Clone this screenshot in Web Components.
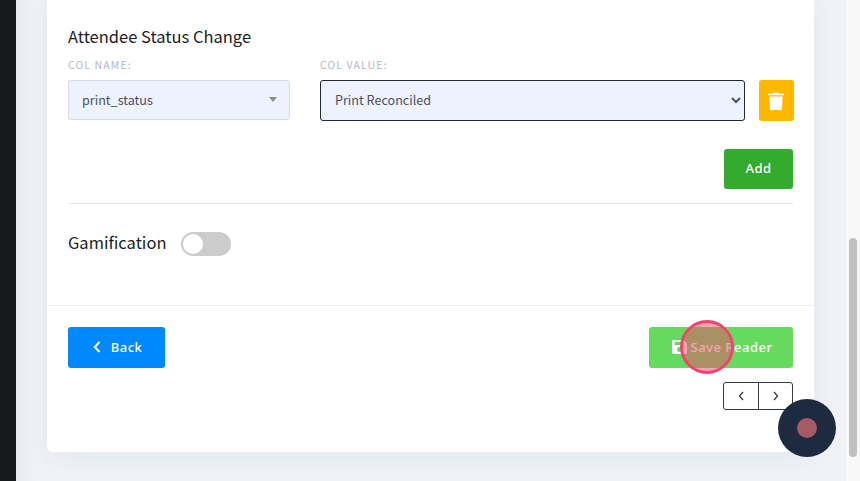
<!DOCTYPE html>
<html>
<head>
<meta charset="utf-8">
<title>Reader</title>
<style>
  html, body { margin: 0; height: 100%; overflow: hidden; }
  body { font-family: "Noto Sans CJK JP", "Noto Sans", sans-serif; background: #f1f2f8; }
</style>
</head>
<body>
<reader-page>
  <reader-card>
    <status-change slot="body"></status-change>
    <gamification-row slot="body"></gamification-row>
    <reader-footer slot="footer"></reader-footer>
  </reader-card>
</reader-page>
<click-marker></click-marker>
<chat-bubble></chat-bubble>

<script>
class ReaderPage extends HTMLElement {
    connectedCallback() {
        this.attachShadow({ mode: 'open' });
        this.shadowRoot.innerHTML = `
            <style>
                :host {
                    display: flex;
                    height: 481px;
                    overflow: hidden;
                }
                .strip { width: 16px; background: #17191c; flex: none; }
                .content {
                    flex: 1;
                    padding: 0 31px;
                    min-width: 0;
                    background: linear-gradient(90deg, #e9eaf1 0, #f1f2f8 20px);
                }
                .track {
                    width: 15px;
                    flex: none;
                    background: #f8f8f8;
                    border-left: 1px solid #eeeeee;
                    box-sizing: border-box;
                    padding-top: 238px;
                }
                .thumb {
                    width: 8px;
                    height: 219px;
                    margin-left: 3px;
                    border-radius: 4px;
                    background: #c0c0c0;
                }
            </style>
            <div class="strip"></div>
            <div class="content"><slot></slot></div>
            <div class="track"><div class="thumb"></div></div>
        `;
    }
}

class ReaderCard extends HTMLElement {
    connectedCallback() {
        this.attachShadow({ mode: 'open' });
        this.shadowRoot.innerHTML = `
            <style>
                :host {
                    display: block;
                    background: #fff;
                    height: 452px;
                    border-radius: 0 0 6px 6px;
                    box-shadow: 0 4px 24px rgba(40, 50, 90, 0.07);
                }
                .body { padding: 25px 21px 0; box-sizing: border-box; border-bottom: 1px solid #eceef1; height: 306px; }
                .foot { padding: 21px 21px 0; }
            </style>
            <div class="body"><slot name="body"></slot></div>
            <div class="foot"><slot name="footer"></slot></div>
        `;
    }
}

class StatusChange extends HTMLElement {
    connectedCallback() {
        this.attachShadow({ mode: 'open' });
        this.shadowRoot.innerHTML = `
            <style>
                :host { display: block; }
                h3 {
                    margin: 0;
                    font-size: 16.5px;
                    line-height: 22px;
                    font-weight: 400;
                    color: #1b1d21;
                }
                .row {
                    display: flex;
                    align-items: flex-start;
                    margin-top: 11px;
                }
                .name { width: 222px; flex: none; }
                .value { width: 425px; flex: none; margin-left: 30px; }
                label {
                    display: block;
                    font-size: 10.5px;
                    line-height: 14px;
                    letter-spacing: 1.1px;
                    color: #b4b9c3;
                    margin-bottom: 8px;
                }
                .fake, select {
                    display: block;
                    box-sizing: border-box;
                    width: 100%;
                    font: 12.6px "Noto Sans CJK JP", "Noto Sans", sans-serif;
                    color: #4a5060;
                    background-color: #eef2fd;
                    border-radius: 3px;
                }
                .fake {
                    display: flex;
                    align-items: center;
                    justify-content: space-between;
                    height: 40px;
                    padding: 0 12px 2px 13px;
                    border: 1px solid #d8dbe3;
                }
                .caret {
                    width: 0;
                    height: 0;
                    border: 4px solid transparent;
                    border-top: 5px solid #888c94;
                    border-bottom: 0;
                }
                select {
                    height: 41px;
                    padding: 0 10px 2px;
                    border: 1px solid #1e2738;
                    outline: none;
                }
                .trash {
                    flex: none;
                    display: flex;
                    align-items: center;
                    justify-content: center;
                    box-sizing: border-box;
                    width: 35px;
                    height: 41px;
                    margin: 22px 0 0 14px;
                    padding-right: 1px;
                    background: #ffb700;
                    border-radius: 3px;
                }
                .actions {
                    display: flex;
                    justify-content: flex-end;
                    margin-top: 28px;
                }
                .add {
                    width: 69px;
                    height: 40px;
                    border: 0;
                    padding: 0 0 2px;
                    border-radius: 3px;
                    background: #33ab2e;
                    color: #fff;
                    font: 500 13px "Noto Sans", sans-serif;
                    letter-spacing: 0.5px;
                }
                hr {
                    border: 0;
                    border-top: 1px solid #e4e6ea;
                    margin: 14px 0 0;
                }
            </style>
            <h3>Attendee Status Change</h3>
            <div class="row">
                <div class="name">
                    <label>COL NAME:</label>
                    <div class="fake"><span>print_status</span><span class="caret"></span></div>
                </div>
                <div class="value">
                    <label>COL VALUE:</label>
                    <select><option>Print Reconciled</option></select>
                </div>
                <div class="trash">
                    <svg width="16" height="18" viewBox="0 0 16 18">
                        <path fill="#fff" d="M5.5 0.5h5l0.6 1.300H15.400c0.300 0 0.600 0.300 0.600 0.600v0.900H0V2.400c0-0.300 0.300-0.600 0.600-0.600h4.300zM1.400 4.400h13.200l-0.700 12c0 0.900-0.700 1.600-1.600 1.600H3.700c-0.900 0-1.600-0.700-1.600-1.600z"/>
                    </svg>
                </div>
            </div>
            <div class="actions"><button class="add">Add</button></div>
            <hr>
        `;
    }
}

class GamificationRow extends HTMLElement {
    connectedCallback() {
        this.attachShadow({ mode: 'open' });
        this.shadowRoot.innerHTML = `
            <style>
                :host {
                    display: flex;
                    align-items: center;
                    gap: 15px;
                    margin-top: 28px;
                    font-size: 16.5px;
                    line-height: 22px;
                    color: #1b1d21;
                }
                span { margin-top: -4px; }
                .switch {
                    width: 50px;
                    height: 24px;
                    box-sizing: border-box;
                    padding: 2px;
                    border-radius: 12px;
                    background: #cccccc;
                }
                .knob {
                    width: 20px;
                    height: 20px;
                    border-radius: 50%;
                    background: #fff;
                }
            </style>
            <span>Gamification</span>
            <div class="switch"><div class="knob"></div></div>
        `;
    }
}

class ReaderFooter extends HTMLElement {
    connectedCallback() {
        this.attachShadow({ mode: 'open' });
        this.shadowRoot.innerHTML = `
            <style>
                :host { display: block; }
                .buttons {
                    display: flex;
                    justify-content: space-between;
                }
                button {
                    display: flex;
                    align-items: center;
                    justify-content: center;
                    height: 41px;
                    border: 0;
                    padding: 0 0 2px;
                    border-radius: 3px;
                    color: #fff;
                    font: 500 13px "Noto Sans", sans-serif;
                    letter-spacing: 0.5px;
                }
                .back { width: 97px; background: #0088ff; gap: 10px; padding-left: 2px; }
                .save { width: 144px; background: #66da5e; gap: 4px; padding-left: 2px; }
                .pager {
                    display: flex;
                    justify-content: flex-end;
                    margin-top: 14px;
                }
                .pager div {
                    display: flex;
                    align-items: center;
                    justify-content: center;
                    width: 36px;
                    height: 28px;
                    box-sizing: border-box;
                    border: 1px solid #333a44;
                }
                .pager div:first-child { border-radius: 3px 0 0 3px; }
                .pager div:last-child { width: 35px; border-radius: 0 3px 3px 0; margin-left: -1px; }
            </style>
            <div class="buttons">
                <button class="back">
                    <svg width="8" height="12" viewBox="0 0 8 12"><path d="M6.5 1L1.800 6l4.700 5" fill="none" stroke="#fff" stroke-width="2"/></svg>
                    <span>Back</span>
                </button>
                <button class="save">
                    <svg width="15" height="14" viewBox="0 0 15 14"><path fill="#fff" fill-rule="evenodd" d="M1.500 0H11.500l3.500 3.500v9c0 .8-.7 1.500-1.500 1.500h-12C.7 14 0 13.300 0 12.500v-11C0 .7 .7 0 1.500 0zM2.500 2v3h7.500V2zM7.500 7a2.500 2.500 0 1 0 0 5a2.500 2.500 0 1 0 0-5z"/></svg>
                    <span>Save Reader</span>
                </button>
            </div>
            <div class="pager">
                <div><svg width="7" height="10" viewBox="0 0 7 10"><path d="M5 1L1.500 5 5 9" fill="none" stroke="#333a44" stroke-width="1.300"/></svg></div>
                <div><svg width="7" height="10" viewBox="0 0 7 10"><path d="M2 1l3.500 4L2 9" fill="none" stroke="#333a44" stroke-width="1.300"/></svg></div>
            </div>
        `;
    }
}

// recording overlays, they sit over the page
class ClickMarker extends HTMLElement {
    connectedCallback() {
        this.attachShadow({ mode: 'open' });
        this.shadowRoot.innerHTML = `
            <style>
                :host {
                    position: fixed;
                    left: 680px;
                    top: 320px;
                    width: 54px;
                    height: 54px;
                    box-sizing: border-box;
                    border: 3px solid #f0456a;
                    border-radius: 50%;
                    background: rgba(240, 70, 110, 0.5);
                }
            </style>
        `;
    }
}

class ChatBubble extends HTMLElement {
    connectedCallback() {
        this.attachShadow({ mode: 'open' });
        this.shadowRoot.innerHTML = `
            <style>
                :host {
                    position: fixed;
                    left: 778px;
                    top: 399px;
                    width: 58px;
                    height: 58px;
                    display: flex;
                    align-items: center;
                    justify-content: center;
                    border-radius: 50%;
                    background: #1d2a3f;
                }
                .dot {
                    width: 20px;
                    height: 20px;
                    border-radius: 50%;
                    background: #a65a64;
                }
            </style>
            <div class="dot"></div>
        `;
    }
}

customElements.define('reader-page', ReaderPage);
customElements.define('reader-card', ReaderCard);
customElements.define('status-change', StatusChange);
customElements.define('gamification-row', GamificationRow);
customElements.define('reader-footer', ReaderFooter);
customElements.define('click-marker', ClickMarker);
customElements.define('chat-bubble', ChatBubble);
</script>
</body>
</html>
